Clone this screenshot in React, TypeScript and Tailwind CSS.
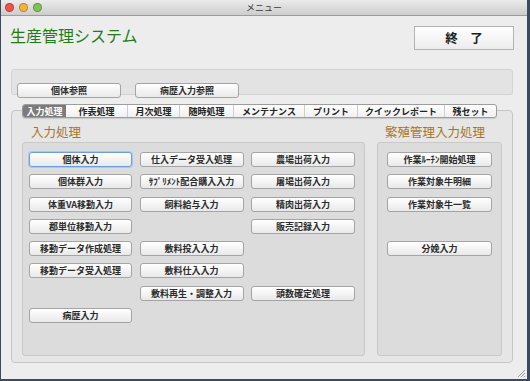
import React from 'react';

const jp = "font-['Noto_Sans_CJK_JP','Liberation_Sans',sans-serif]";

const tabs = [
  { label: '入力処理', w: 43 },
  { label: '作表処理', w: 61 },
  { label: '月次処理', w: 52 },
  { label: '随時処理', w: 54 },
  { label: 'メンテナンス', w: 71 },
  { label: 'プリント', w: 53 },
  { label: 'クイックレポート', w: 87 },
  { label: '残セット', w: 52 },
];

// '' = empty cell
const mainGrid = [
  '個体入力', '仕入データ受入処理', '農場出荷入力',
  '個体群入力', 'ｻﾌﾟﾘﾒﾝﾄ配合購入入力', '屠場出荷入力',
  '体重VA移動入力', '飼料給与入力', '精肉出荷入力',
  '郡単位移動入力', '', '販売記録入力',
  '移動データ作成処理', '敷料投入入力', '',
  '移動データ受入処理', '敷料仕入入力', '',
  '', '敷料再生・調整入力', '頭数確定処理',
  '病歴入力', '', '',
];

const breedGrid = ['作業ﾙｰﾁﾝ開始処理', '作業対象牛明細', '作業対象牛一覧', '', '分娩入力', '', '', ''];

function Btn({ label, focus }: { label: string; focus?: boolean }) {
  if (!label) return <div className="h-[15px]" />;
  return (
    <button
      className={`h-[15px] w-full rounded-[3px] border bg-linear-to-b from-white to-[#e9e9e9] text-[9px] leading-none font-bold text-[#2b2b2b] ${
        focus ? 'border-[#6b9de0] shadow-[0_0_0_1px_#a9c8f0]' : 'border-[#a4a4a4]'
      }`}
    >
      {label}
    </button>
  );
}

function TrafficLight({ color }: { color: string }) {
  return <span className={`h-[9px] w-[9px] rounded-full border border-black/25 ${color}`} />;
}

export default function App() {
  return (
    <div className={`h-[381px] w-[530px] overflow-hidden bg-[#3d4a5e] ${jp}`}>
      <div className="relative ml-[1px] flex h-[379px] w-[526px] flex-col bg-[#ededed]">
        {/* title bar */}
        <div className="relative flex h-[16px] items-center border-b border-[#9c9c9c] bg-linear-to-b from-[#ebebeb] to-[#cdcdcd]">
          <div className="ml-[4px] flex gap-[5px]">
            <TrafficLight color="bg-[#f0524c]" />
            <TrafficLight color="bg-[#f4b23a]" />
            <TrafficLight color="bg-[#7fc452]" />
          </div>
          <span className="absolute left-1/2 -translate-x-1/2 text-[9px] leading-none text-[#3a3a3a]">メニュー</span>
        </div>

        {/* header */}
        <div className="flex items-start justify-between pr-[13px] pl-[9px] pt-[10px]">
          <h1 className="mt-[1px] text-[16px] leading-none text-[#1d7d16]">生産管理システム</h1>
          <button className="h-[24px] w-[100px] border border-[#b4b4b4] bg-linear-to-b from-white to-[#ececec] text-[12.5px] leading-none font-bold text-[#1e1e1e]">
            終　了
          </button>
        </div>

        {/* reference box */}
        <div className="mt-[19px] ml-[10px] flex h-[26px] w-[502px] gap-[14px] rounded-[3px] border border-[#d3d3d3] bg-[#e3e3e3] pt-[5px] pl-[5px]">
          <div className="w-[104px]"><Btn label="個体参照" /></div>
          <div className="w-[104px]"><Btn label="病歴入力参照" /></div>
        </div>

        {/* tab box */}
        <div className="mt-[15px] ml-[10px] flex h-[253px] w-[502px] flex-col rounded-[4px] border border-[#c6c6c6] bg-[#e6e6e6]">
          <div className="-mt-[7px] ml-[10px] flex h-[14px] w-fit overflow-hidden rounded-[3px] border border-[#9d9d9d] bg-linear-to-b from-white to-[#f0f0f0] shadow-[0_1px_1px_rgba(0,0,0,0.12)]">
            {tabs.map((t, i) => (
              <div
                key={t.label}
                style={{ width: t.w }}
                className={`flex shrink-0 items-center justify-center text-[9px] leading-none font-bold ${
                  i === 0 ? 'bg-[#7b7b7b] text-white' : 'border-l border-[#cdcdcd] text-[#222]'
                } ${i === 1 ? 'border-l-0' : ''}`}
              >
                {t.label}
              </div>
            ))}
          </div>

          <div className="ml-[10px] flex gap-[12px]">
            <div className="flex flex-col">
              <div className="h-[24px] pt-[8px] pl-[9px] text-[12.5px] leading-none text-[#a8761c]">入力処理</div>
              <div className="h-[214px] w-[343px] rounded-[3px] border border-[#c9c9c9] bg-[#dcdcdc] pt-[9px] pl-[6px]">
                <div className="grid grid-cols-[103px_104px_104px] gap-x-[7.5px] gap-y-[7.3px]">
                  {mainGrid.map((l, i) => (
                    <Btn key={i} label={l} focus={i === 0} />
                  ))}
                </div>
              </div>
            </div>
            <div className="flex flex-col">
              <div className="h-[24px] pt-[8px] pl-[8px] text-[12.5px] leading-none text-[#a8761c]">繁殖管理入力処理</div>
              <div className="h-[214px] w-[125px] rounded-[3px] border border-[#c9c9c9] bg-[#dcdcdc] pt-[9px] pl-[9px]">
                <div className="grid w-[105px] grid-cols-1 gap-y-[7.3px]">
                  {breedGrid.map((l, i) => (
                    <Btn key={i} label={l} />
                  ))}
                </div>
              </div>
            </div>
          </div>
        </div>

        {/* resize grip */}
        <svg className="absolute right-[1px] bottom-[1px]" width="10" height="10" viewBox="0 0 10 10">
          <path d="M9 2 L2 9 M9 5 L5 9 M9 8 L8 9" stroke="#9a9a9a" strokeWidth="1" />
        </svg>
      </div>
    </div>
  );
}
